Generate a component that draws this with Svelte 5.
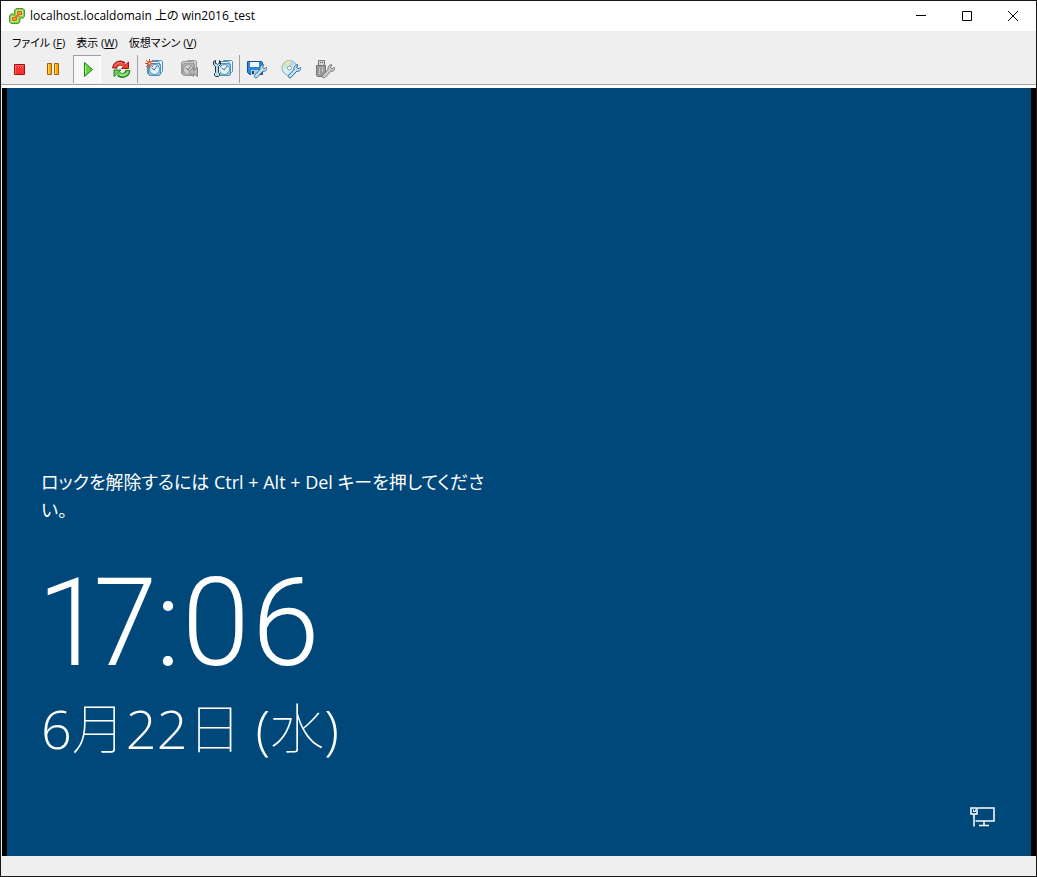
<script>
  let running = $state(true);

  const menus = [
    { label: 'ファイル', key: 'F' },
    { label: '表示', key: 'W' },
    { label: '仮想マシン', key: 'V' }
  ];
</script>

{#snippet snapshotPages(line, page, face, hand)}
  <path d="M8.500 1.500h8l1 1v10l-1 1h-8z" fill={page} stroke={line} />
  <path d="M2.500 3.500l1-1h10l1 1v11h-12z" fill={page} stroke={line} />
  <path d="M3.500 5.500h1v-1h10v1h1v10h-1v1h-10v-1h-1z" fill={face} stroke={line} />
  <circle cx="9.500" cy="10.500" r="5" fill={page} stroke={line} />
  <path d="M9 11l3-4M9.500 11L6.500 9" fill="none" stroke={hand} />
{/snippet}

{#snippet wrench(line, fill)}
  <path
    d="M7.500 16.500l5.500-6c-.5-2.500 1-4.500 3.500-5l.500.500-1.500 2 1 1.500h1.500l1.500-1.500.500.500c0 3-2 4.200-4.200 3.700l-5.800 6.300c-1.500 1-3.500-.4-2.500-2z"
    fill={fill}
    stroke={line}
  />
{/snippet}

<div class="window">
  <header class="titlebar">
    <svg class="logo" viewBox="0 0 16 16" aria-hidden="true">
      <path d="M7 .5h7L15.500 2v6.500L14 10h-3v4l-1.500 1.500H2L.5 14V7.500L2 6h3.500V2z" fill="#8bcc4a" stroke="#4f9b2c" />
      <path d="M7.500 2.500h6v5.500h-5v5.500h-6V8h5z" fill="#fff" />
      <path d="M8.500 3.500h4v3.500h-4zM3.500 9h4v3.500h-4z" fill="#f6a019" stroke="#b86b12" />
      <path d="M6 10l4-4" stroke="#d9771a" stroke-width="2" />
    </svg>
    <h1>localhost.localdomain 上の win2016_test</h1>
    <div class="caption">
      <button type="button" aria-label="最小化">
        <svg viewBox="0 0 10 10"><path d="M0 4.500h10" /></svg>
      </button>
      <button type="button" aria-label="最大化">
        <svg viewBox="0 0 10 10"><path d="M.5.5h9v9h-9z" /></svg>
      </button>
      <button type="button" aria-label="閉じる">
        <svg viewBox="0 0 10 10"><path d="M0 0l10 10M10 0L0 10" /></svg>
      </button>
    </div>
  </header>

  <nav class="menubar">
    {#each menus as menu}
      <button type="button">{menu.label} (<u>{menu.key}</u>)</button>
    {/each}
  </nav>

  <div class="toolbar" role="toolbar">
    <div class="group">
      <button type="button" aria-label="停止" onclick={() => (running = false)}>
        <svg viewBox="0 0 20 20">
          <path d="M5.500 5.500h10v10h-10z" fill="#fb3131" stroke="#a31010" />
          <path d="M6 6.500h9M6.500 6v9" stroke="#ff6262" />
          <path d="M9 8.500h1m1 0h1m1 0h1" stroke="#ffaaa0" />
        </svg>
      </button>
      <button type="button" aria-label="一時停止">
        <svg viewBox="0 0 20 20">
          <path d="M4.500 4.500h4v11h-4zM11.500 4.500h4v11h-4z" fill="#f9ad00" stroke="#a85d06" />
          <path d="M5.500 5v10M12.500 5v10" stroke="#ffda59" />
        </svg>
      </button>
      <button type="button" aria-label="実行" aria-pressed={running} onclick={() => (running = true)}>
        <svg viewBox="0 0 20 20">
          <path d="M7.500 3.500l8 7-8 7z" fill="#6bd13e" stroke="#14861c" />
          <path d="M8.500 6v8.500" stroke="#b5f08d" />
        </svg>
      </button>
      <button type="button" aria-label="リセット">
        <svg viewBox="0 0 20 20">
          <path d="M3.500 9.500C4 4.500 9 2.500 13 5.500" stroke="#9f1711" stroke-width="5" />
          <path d="M17.500 3v6.500h-7z" fill="#ef4032" stroke="#9f1711" />
          <path d="M3.500 8.500C4.500 4.500 9 2.800 13.500 6.500" stroke="#f04a3b" stroke-width="3" />
          <path d="M4 6.500C6 3.500 9 3 11.500 4" stroke="#ff9a8c" />
          <path d="M17 11c-.5 5-5.500 7-9.500 4" stroke="#178125" stroke-width="5" />
          <path d="M3 17.500V11h7z" fill="#75cd53" stroke="#178125" />
          <path d="M17 12c-1 4-5.500 5.700-10 2" stroke="#75cd53" stroke-width="3" />
          <path d="M16.500 13.500c-2 3-5 3.500-7.500 2.500" stroke="#c6f5a7" />
        </svg>
      </button>
    </div>
    <div class="group">
      <button type="button" aria-label="スナップショットの作成">
        <svg viewBox="0 0 20 20">
          {@render snapshotPages('#5290b6', '#e3f3fc', '#9ccbe9', '#46687e')}
          <path d="M4.500 0v9M0 4.500h9M1 1l7 7M8 1L1 8" stroke="#e4452e" />
          <path d="M3.500 4.500h2M4.500 3.500v2" stroke="#ffe36b" />
        </svg>
      </button>
      <button type="button" aria-label="スナップショットまで戻る">
        <svg viewBox="0 0 20 20">
          {@render snapshotPages('#999', '#cfcfcf', '#b4b4b4', '#777')}
          <path d="M14.500 8.500v3l4-3v9l-4-3v3l-5-4.500z" fill="#b5b5b5" stroke="#858585" />
        </svg>
      </button>
      <button type="button" aria-label="スナップショットマネージャ">
        <svg viewBox="0 0 20 20">
          <g transform="translate(2 0)">
            {@render snapshotPages('#5290b6', '#e3f3fc', '#9ccbe9', '#46687e')}
          </g>
          <path d="M1 1h6v17H1z" fill="#efefef" />
          <path d="M.5 2.500v3l2 2v6l-1 1v2l1 1h3l1-1v-2l-1-1v-6l2-2v-3l-1-1v3h-1l-1 1-1-1h-1v-3z" fill="#b7d9ec" stroke="#1c3646" />
        </svg>
      </button>
    </div>
    <div class="group">
      <button type="button" aria-label="フロッピーの接続">
        <svg viewBox="0 0 20 20">
          <path d="M.5 2.500h14l1 1v12h-13l-2-2z" fill="#2788dc" stroke="#145097" />
          <path d="M3 3h9v5H3z" fill="#f4f8fb" />
          <path d="M4 11h8v5H4z" fill="#b9cbd8" />
          <path d="M5 12h2v3H5z" fill="#174775" />
          {@render wrench('#3e7092', '#bfe2f5')}
        </svg>
      </button>
      <button type="button" aria-label="CD/DVD の接続">
        <svg viewBox="0 0 20 20">
          <circle cx="8.500" cy="9" r="7.500" fill="#dcecf4" stroke="#8ba9ba" />
          <path d="M8.500 9L4 3a8 8 0 0 1 5-1.500z" fill="#ffe08a" />
          <path d="M8.500 9L1.500 9a8 8 0 0 1 3-6z" fill="#c5ebcb" />
          <path d="M8.500 9L9 1.500a8 8 0 0 1 5 3z" fill="#acd9fa" />
          <circle cx="8.500" cy="9" r="2" fill="#fff" stroke="#829eae" />
          {@render wrench('#286b9c', '#bfe2f5')}
        </svg>
      </button>
      <button type="button" aria-label="USB の接続" disabled>
        <svg viewBox="0 0 20 20">
          <path d="M3.500 1.500h6v5h-6z" fill="#d2d2d2" stroke="#777" />
          <path d="M5 3.500h1m1 0h1" stroke="#555" />
          <path d="M1.500 6.500h9v10l-1 1h-7l-1-1z" fill="#999" stroke="#777" />
          <path d="M4.500 9v6M7.500 8v5" stroke="#c5c5c5" />
          {@render wrench('#777', '#cacaca')}
        </svg>
      </button>
    </div>
  </div>

  <main class="screen">
    <div class="lock">
      <p class="message">ロックを解除するには Ctrl + Alt + Del キーを押してください。</p>
      <time class="clock" datetime="17:06">17:06</time>
      <time class="date" datetime="2016-06-22">6月22日 (水)</time>
    </div>
    <svg class="network" viewBox="0 0 26 22" role="img" aria-label="ネットワーク">
      <path d="M8 2h16v13H5.500M1 2h6v6H1zM4 8v12.500M14 15v4.500M9 19.500h10" />
      <path class="thin" d="M3.500 3.500v2h2v-2" />
    </svg>
  </main>

  <footer class="status"></footer>
</div>

<style>
  :global(body) {
    margin: 0;
    background: #efefef;
  }

  .window {
    box-sizing: border-box;
    display: flex;
    flex-direction: column;
    min-height: 100vh;
    border: 1px solid #18181a;
    background: #efefef;
    color: #000;
    font: 12px/16px 'Open Sans', 'Noto Sans CJK JP', sans-serif;
    font-feature-settings: 'palt';
  }

  button {
    border: 0;
    padding: 0;
    background: none;
    color: inherit;
    font: inherit;
    font-feature-settings: inherit;
  }

  .titlebar {
    display: flex;
    align-items: center;
    height: 30px;
    padding-left: 8px;
    background: #fff;
  }

  .logo {
    width: 16px;
    height: 16px;
  }

  h1 {
    flex: 1;
    margin: 0 0 0 5px;
    font-size: 12px;
    font-weight: 400;
    white-space: nowrap;
  }

  .caption {
    display: flex;
    align-self: stretch;
  }

  .caption button {
    display: grid;
    place-items: center;
    width: 46px;
  }

  .caption svg {
    width: 10px;
    height: 10px;
    fill: none;
    stroke: #000;
  }

  .menubar {
    display: flex;
    gap: 11px;
    padding: 4px 11px;
    font-size: 11px;
  }

  .menubar button {
    white-space: nowrap;
  }

  .toolbar {
    display: flex;
    padding: 0 1px 1px;
    border-bottom: 1px solid #a0a0a0;
  }

  .group {
    display: flex;
  }

  .group + .group {
    box-shadow: -1px 0 #a0a0a0;
  }

  .toolbar button {
    display: grid;
    place-items: center;
    width: 34px;
    height: 28px;
  }

  .toolbar svg {
    width: 20px;
    height: 20px;
    fill: none;
  }

  .toolbar button[aria-pressed='true'] {
    width: 28px;
    margin: 0 3px;
    background: #f7f7f7;
    box-shadow: inset 1px 1px #a0a0a0, inset -1px -1px #fff;
  }

  .screen {
    flex: 1;
    display: flex;
    align-items: flex-end;
    justify-content: space-between;
    margin: 3px 0 0 1px;
    padding: 0 35px 28px 34px;
    border: solid #000;
    border-width: 0 5px;
    background: #004879;
    box-shadow: 0 -3px #fff;
    color: #fff;
  }

  .lock {
    display: flex;
    flex-direction: column;
    width: 450px;
    padding-bottom: 60px;
  }

  .message {
    margin: 0 0 40px;
    font-size: 18px;
    line-height: 28px;
  }

  .clock {
    font: 300 122px/120px Roboto, sans-serif;
    font-feature-settings: 'pnum';
  }

  .date {
    margin-top: 4px;
    font: 100 54px/80px 'Open Sans', 'Noto Sans CJK JP', sans-serif;
  }

  .network {
    width: 26px;
    height: 22px;
    fill: none;
    stroke: #fff;
    stroke-width: 2;
  }

  .network path {
    stroke-width: 1.5;
  }

  .network .thin {
    stroke-width: 1;
  }

  .status {
    height: 20px;
  }
</style>
